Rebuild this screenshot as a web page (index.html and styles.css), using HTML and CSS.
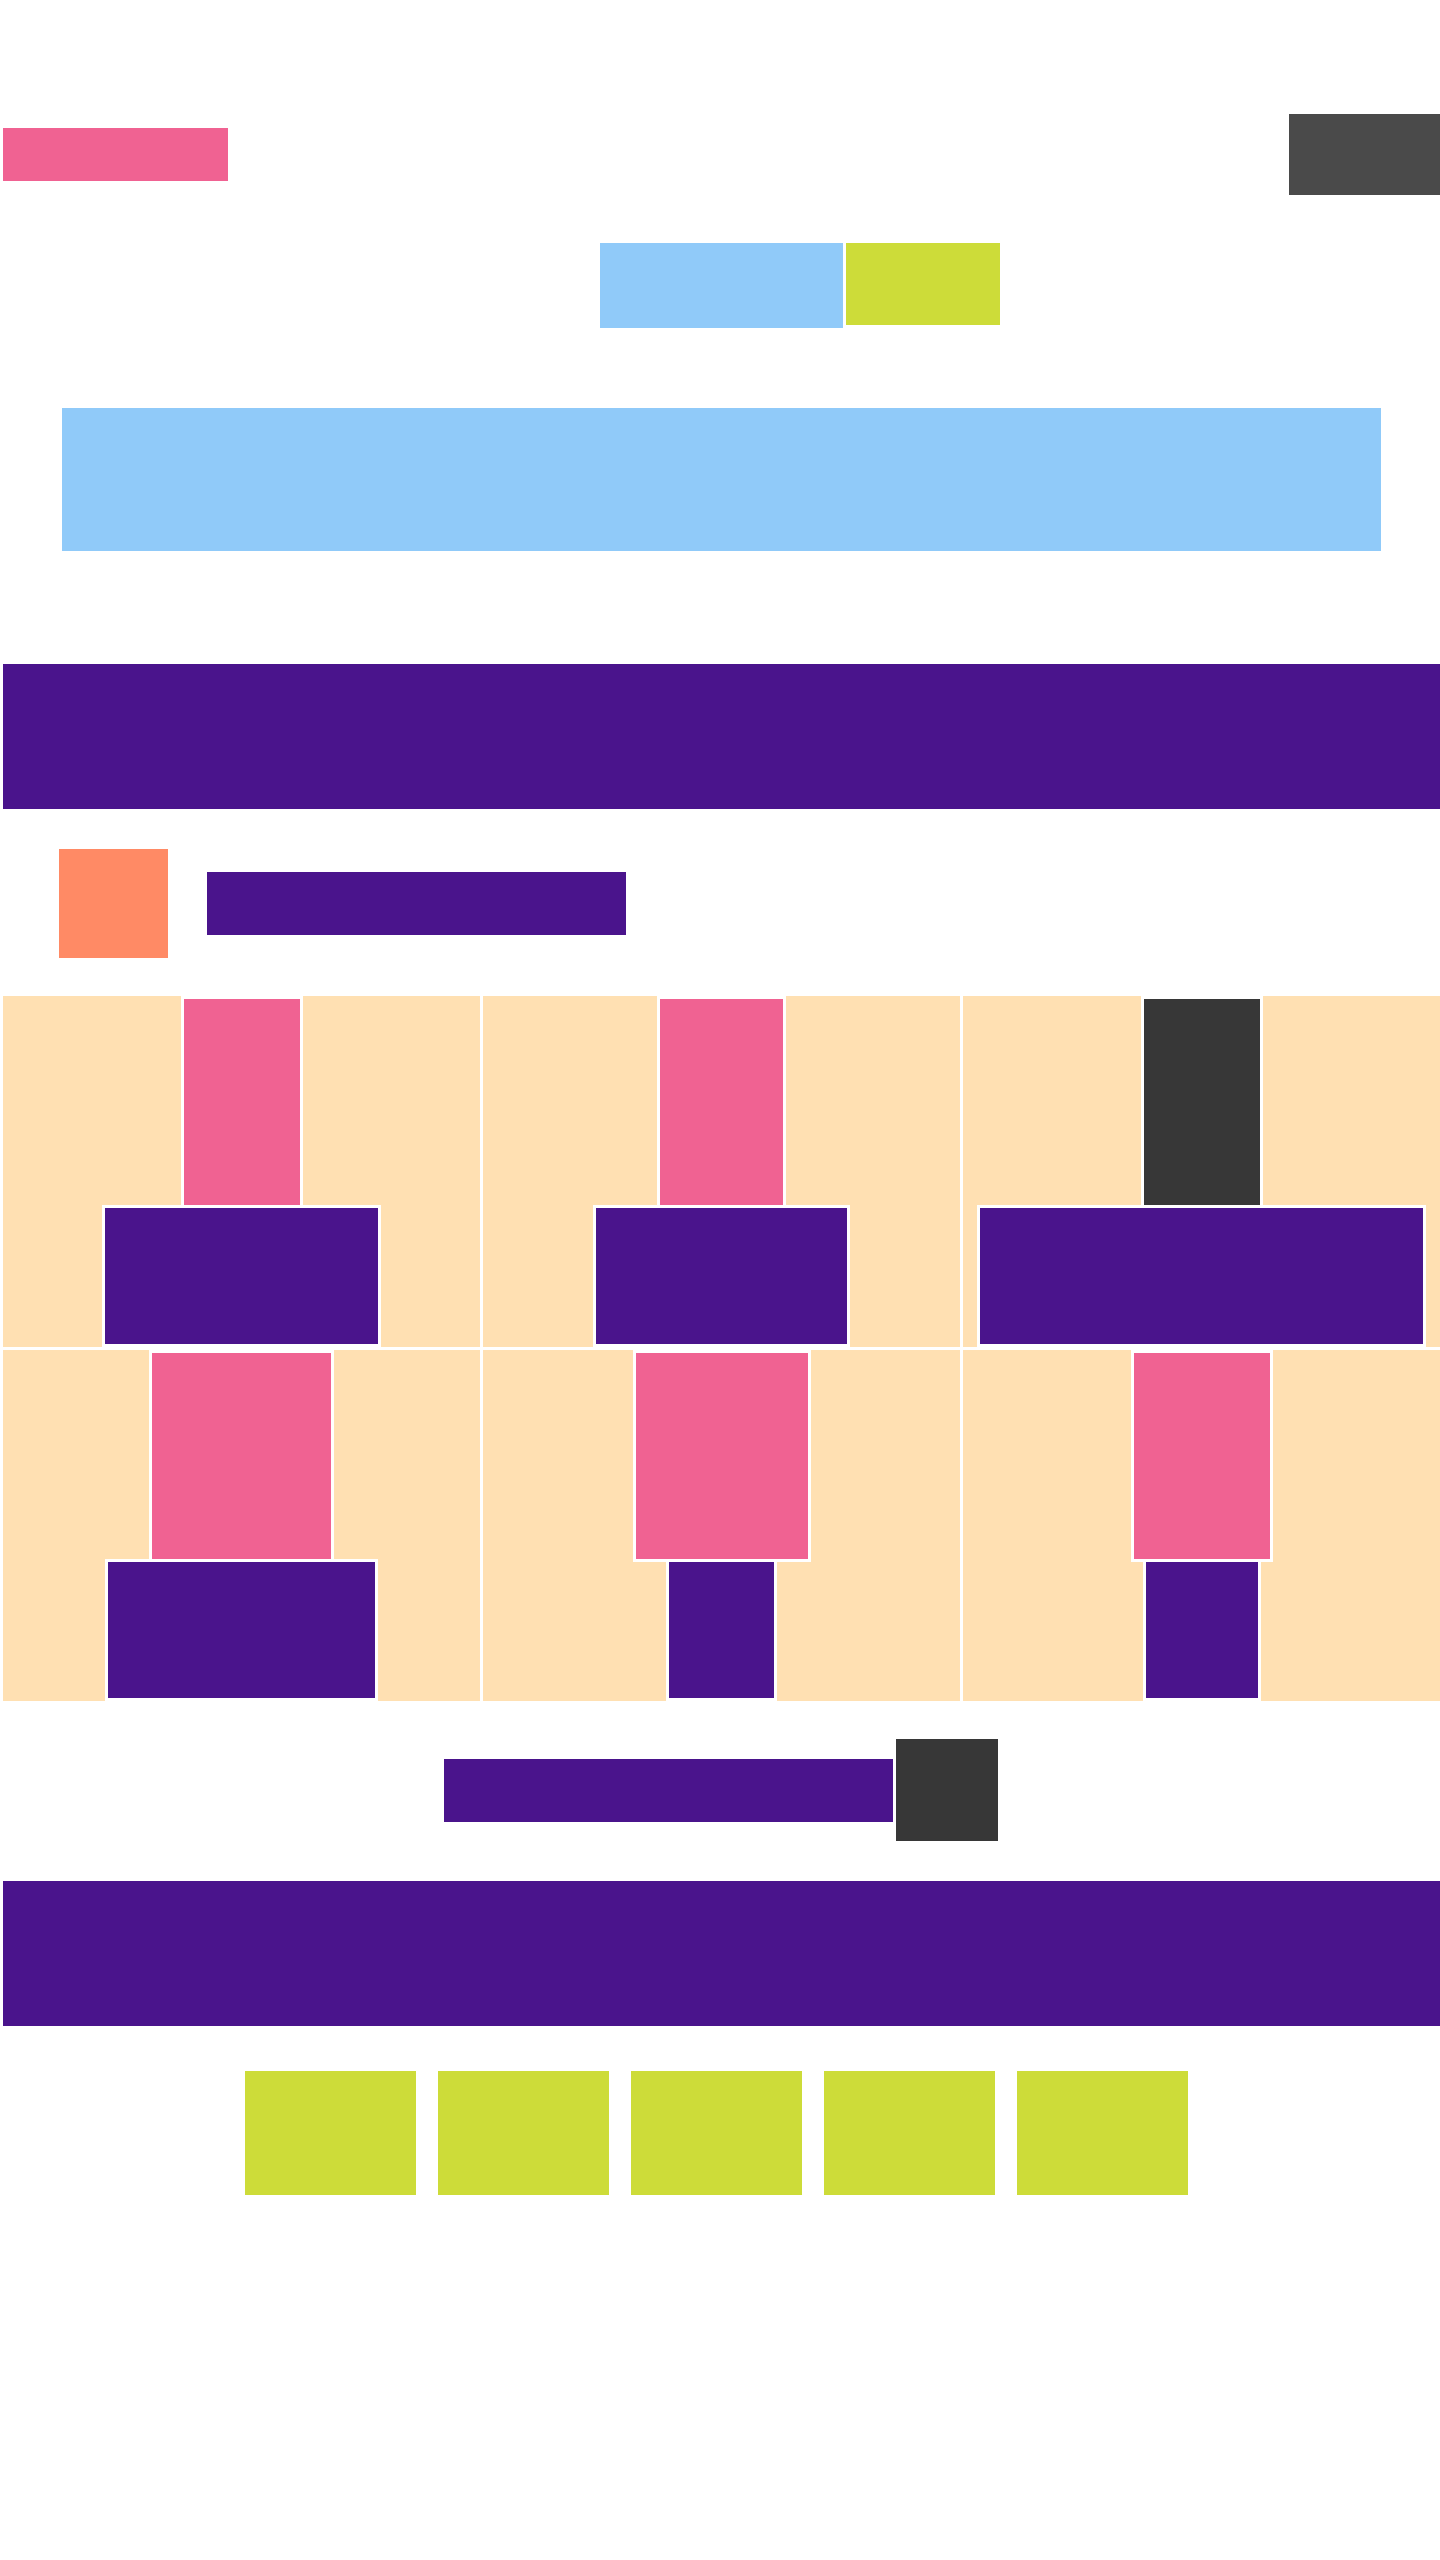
FILE: index.html
```html
<!DOCTYPE html>
<html lang="en">
<head>
<meta charset="UTF-8">
<meta name="viewport" content="width=device-width, initial-scale=1.0">
<title>Layout</title>
<link rel="stylesheet" href="styles.css">
</head>
<body>
<div class="header">
    <div class="brand"></div>
    <div class="menu-btn"></div>
</div>

<div class="tabs">
    <div class="tab-main"></div>
    <div class="tab-side"></div>
</div>

<div class="banner"></div>

<div class="band"></div>

<div class="section-title">
    <div class="section-icon"></div>
    <div class="section-label"></div>
</div>

<div class="grid">
    <div class="card">
        <div class="card-img" style="width: 116px;"></div>
        <div class="card-text" style="width: 273px;"></div>
    </div>
    <div class="card">
        <div class="card-img" style="width: 123px;"></div>
        <div class="card-text" style="width: 251px;"></div>
    </div>
    <div class="card">
        <div class="card-img dark" style="width: 116px;"></div>
        <div class="card-text" style="width: 443px;"></div>
    </div>
    <div class="card">
        <div class="card-img" style="width: 179px;"></div>
        <div class="card-text" style="width: 267px;"></div>
    </div>
    <div class="card">
        <div class="card-img" style="width: 172px;"></div>
        <div class="card-text" style="width: 105px;"></div>
    </div>
    <div class="card">
        <div class="card-img" style="width: 136px;"></div>
        <div class="card-text" style="width: 112px;"></div>
    </div>
</div>

<div class="more">
    <div class="more-label"></div>
    <div class="more-btn"></div>
</div>

<div class="band footer-band"></div>

<div class="pager">
    <div class="page"></div>
    <div class="page"></div>
    <div class="page"></div>
    <div class="page"></div>
    <div class="page"></div>
</div>
</body>
</html>
```

FILE: styles.css
```css
body {
    font-family: "Liberation Sans", Arial, sans-serif;
    margin: 0;
    background: #fff;
}
.header {
    display: flex;
    justify-content: space-between;
    align-items: center;
    height: 81px;
    margin-top: 114px;
    padding-left: 3px;
}
.brand {
    width: 225px;
    height: 53px;
    background: #f06292;
}
.menu-btn {
    width: 151px;
    height: 81px;
    background: #4a4a4a;
}
.tabs {
    display: flex;
    align-items: flex-start;
    gap: 3px;
    margin-top: 48px;
    padding-left: 600px;
}
.tab-main {
    width: 243px;
    height: 85px;
    background: #90caf9;
}
.tab-side {
    width: 154px;
    height: 82px;
    background: #cddc39;
}
.banner {
    width: 1319px;
    height: 143px;
    margin: 80px 0 0 62px;
    background: #90caf9;
}
.band {
    height: 145px;
    margin: 113px 0 0 3px;
    background: #4a148c;
}
.section-title {
    display: flex;
    align-items: center;
    margin-top: 40px;
    padding-left: 59px;
}
.section-icon {
    width: 109px;
    height: 109px;
    background: #ff8a65;
}
.section-label {
    width: 419px;
    height: 63px;
    margin-left: 39px;
    background: #4a148c;
}
.grid {
    display: grid;
    grid-template-columns: repeat(3, 477px);
    grid-auto-rows: 351px;
    gap: 3px;
    margin-top: 38px;
    padding-left: 3px;
}
.card {
    background: #ffe0b2;
    display: flex;
    flex-direction: column;
    align-items: center;
    justify-content: center;
}
.card-img {
    height: 207px;
    border: 3px solid #fff;
    background: #f06292;
}
.card-img.dark {
    background: #373737;
}
.card-text {
    height: 137px;
    margin-top: -3px;
    border: 3px solid #fff;
    background: #4a148c;
}
.more {
    display: flex;
    align-items: center;
    gap: 3px;
    margin-top: 38px;
    padding-left: 444px;
}
.more-label {
    width: 449px;
    height: 63px;
    background: #4a148c;
}
.more-btn {
    width: 102px;
    height: 102px;
    background: #373737;
}
.footer-band {
    margin-top: 40px;
}
.pager {
    display: flex;
    gap: 22px;
    margin-top: 45px;
    padding-left: 245px;
}
.page {
    width: 171px;
    height: 124px;
    background: #cddc39;
}
```
